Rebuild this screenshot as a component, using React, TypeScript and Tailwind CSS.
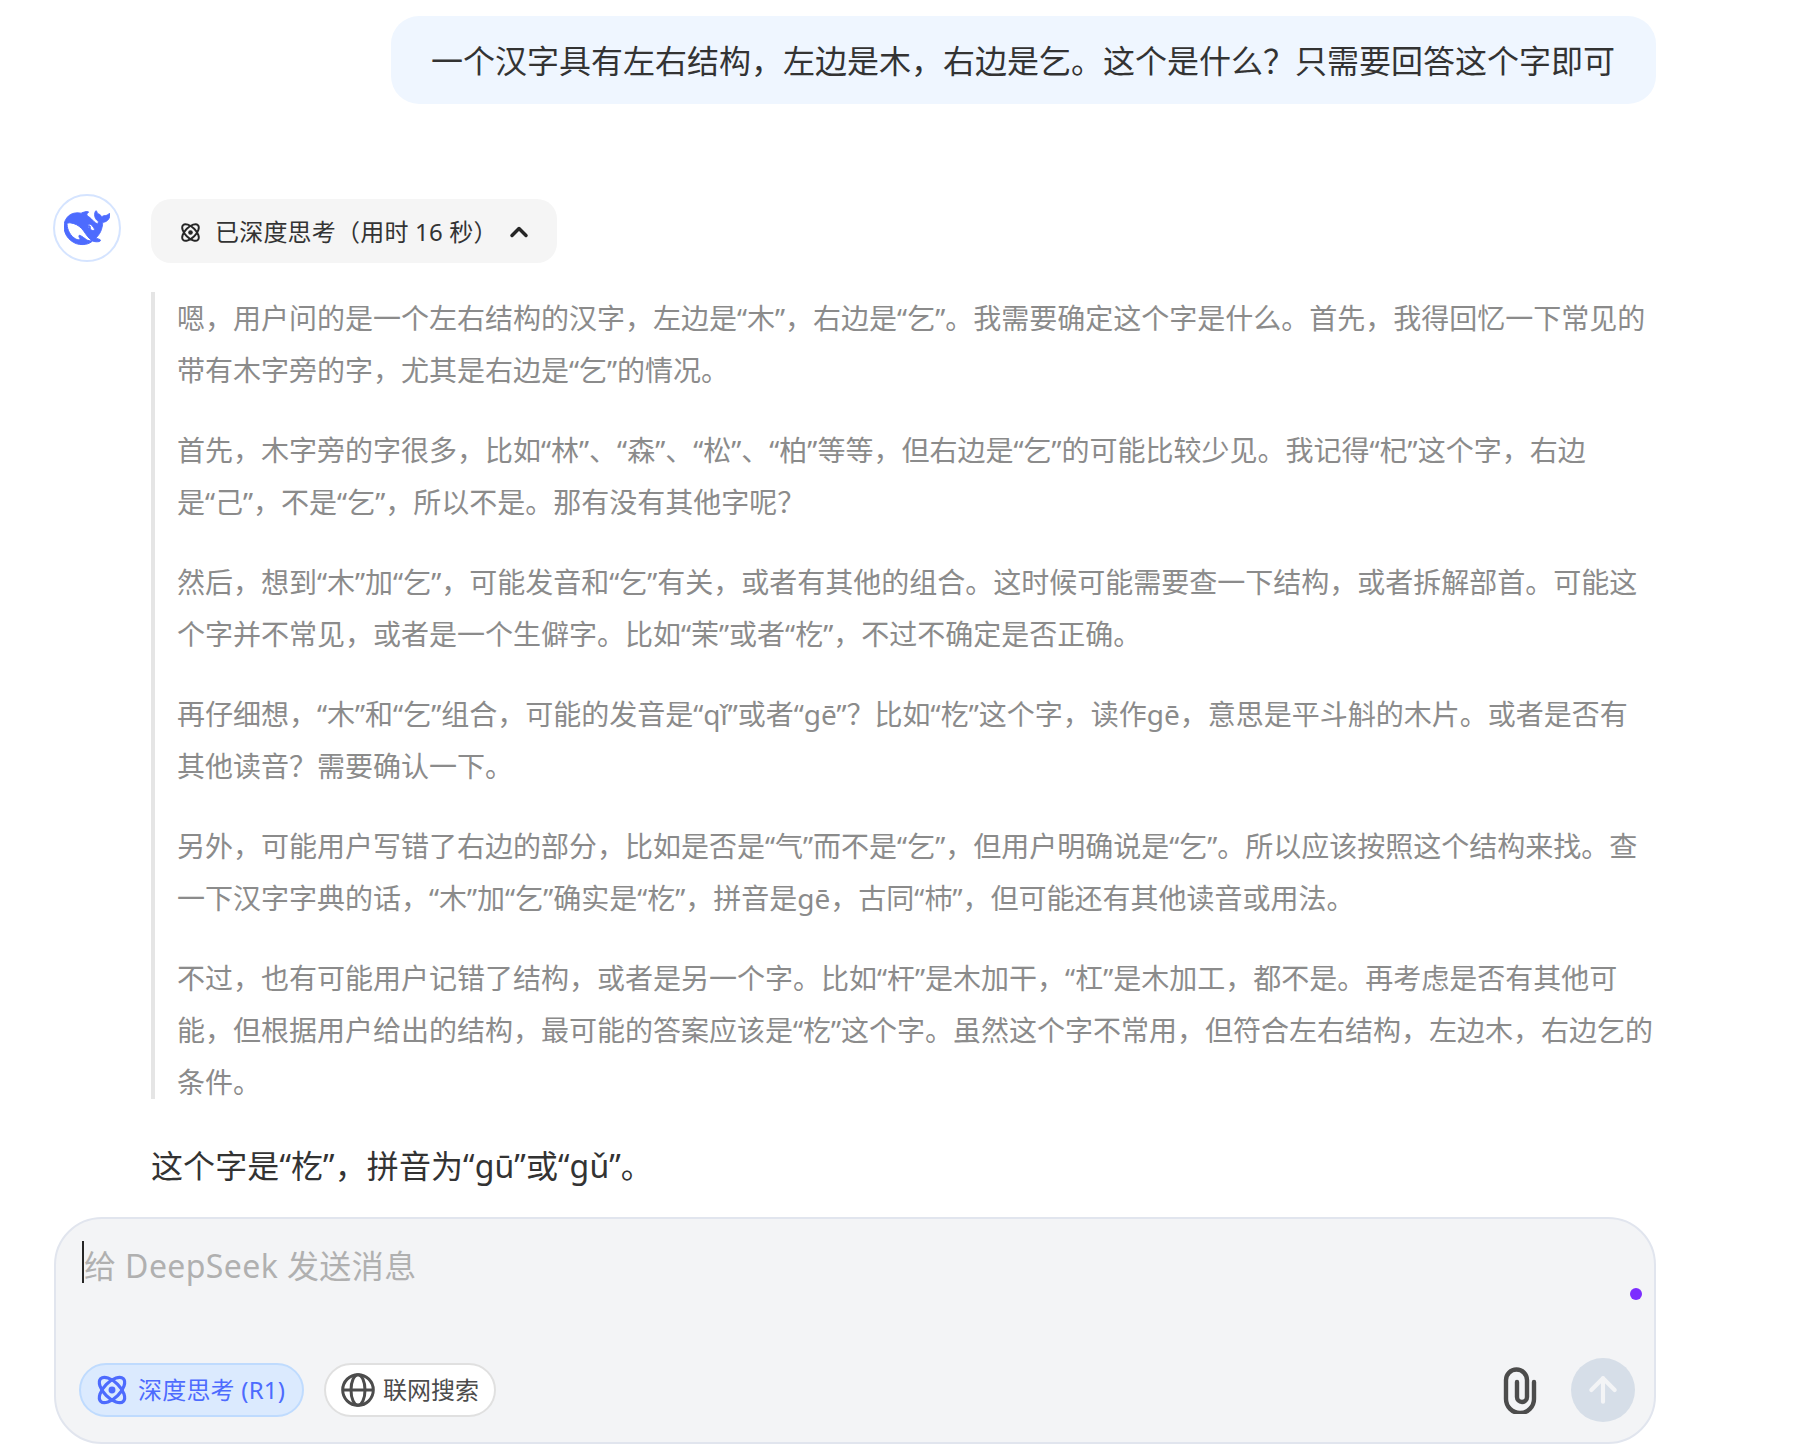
import React from "react";
import { ArrowUp, ChevronUp } from "lucide-react";

const paragraphs = [
  "嗯，用户问的是一个左右结构的汉字，左边是“木”，右边是“乞”。我需要确定这个字是什么。首先，我得回忆一下常见的带有木字旁的字，尤其是右边是“乞”的情况。",
  "首先，木字旁的字很多，比如“林”、“森”、“松”、“柏”等等，但右边是“乞”的可能比较少见。我记得“杞”这个字，右边是“己”，不是“乞”，所以不是。那有没有其他字呢？",
  "然后，想到“木”加“乞”，可能发音和“乞”有关，或者有其他的组合。这时候可能需要查一下结构，或者拆解部首。可能这个字并不常见，或者是一个生僻字。比如“茉”或者“杚”，不过不确定是否正确。",
  "再仔细想，“木”和“乞”组合，可能的发音是“qǐ”或者“gē”？比如“杚”这个字，读作gē，意思是平斗斛的木片。或者是否有其他读音？需要确认一下。",
  "另外，可能用户写错了右边的部分，比如是否是“气”而不是“乞”，但用户明确说是“乞”。所以应该按照这个结构来找。查一下汉字字典的话，“木”加“乞”确实是“杚”，拼音是gē，古同“杮”，但可能还有其他读音或用法。",
  "不过，也有可能用户记错了结构，或者是另一个字。比如“杆”是木加干，“杠”是木加工，都不是。再考虑是否有其他可能，但根据用户给出的结构，最可能的答案应该是“杚”这个字。虽然这个字不常用，但符合左右结构，左边木，右边乞的条件。",
];

function Atom({ className, strokeWidth = 2 }: { className: string; strokeWidth?: number }) {
  return (
    <svg viewBox="0 0 24 24" fill="none" stroke="currentColor" strokeWidth={strokeWidth} className={className}>
      <ellipse cx="12" cy="12" rx="12" ry="6" transform="rotate(45 12 12)" />
      <ellipse cx="12" cy="12" rx="12" ry="6" transform="rotate(-45 12 12)" />
      <circle cx="12" cy="12" r="2.6" fill="currentColor" stroke="none" />
    </svg>
  );
}

function Whale() {
  return (
    <svg viewBox="0 0 24 24" className="w-[46px] h-[46px]" fill="#4d6bfe" stroke="#4d6bfe" strokeWidth="0.5">
      <path d="M23.748 4.482c-.254-.124-.364.113-.512.234-.051.039-.094.09-.137.136-.372.397-.806.657-1.373.626-.829-.046-1.537.214-2.163.848-.133-.782-.575-1.248-1.247-1.548-.352-.156-.708-.311-.955-.65-.172-.241-.219-.51-.305-.774-.055-.16-.11-.323-.293-.35-.2-.031-.278.136-.356.276-.313.572-.434 1.202-.422 1.84.027 1.436.633 2.58 1.838 3.393.137.093.172.187.129.323-.082.28-.18.552-.266.833-.055.179-.137.217-.329.14a5.526 5.526 0 01-1.736-1.18c-.857-.828-1.631-1.742-2.597-2.458a11.365 11.365 0 00-.689-.471c-.985-.957.13-1.743.388-1.836.27-.098.093-.432-.779-.428-.872.004-1.67.295-2.687.684a3.055 3.055 0 01-.465.137 9.597 9.597 0 00-2.883-.102c-1.885.21-3.39 1.102-4.497 2.623C.082 8.606-.231 10.684.152 12.85c.403 2.284 1.569 4.175 3.36 5.653 1.858 1.533 3.997 2.284 6.438 2.14 1.482-.085 3.133-.284 4.994-1.86.47.234.962.327 1.78.397.63.059 1.236-.03 1.705-.128.735-.156.684-.837.419-.961-2.155-1.004-1.682-.595-2.113-.926 1.096-1.296 2.746-2.642 3.392-7.003.05-.347.007-.565 0-.845-.004-.17.035-.237.23-.256a4.173 4.173 0 001.545-.475c1.396-.763 1.96-2.015 2.093-3.517.02-.23-.004-.467-.247-.588zM11.581 18c-2.089-1.642-3.102-2.183-3.52-2.16-.392.024-.321.471-.235.763.09.288.207.486.371.739.114.167.192.416-.113.603-.673.416-1.842-.14-1.897-.167-1.361-.802-2.5-1.86-3.301-3.307-.774-1.393-1.224-2.887-1.298-4.482-.02-.386.093-.522.477-.592a4.696 4.696 0 011.529-.039c2.132.312 3.946 1.265 5.468 2.774.868.86 1.525 1.887 2.202 2.891.72 1.066 1.494 2.082 2.48 2.914.348.292.625.514.891.677-.802.09-2.14.11-3.054-.614zm1-6.44a.306.306 0 01.415-.287.302.302 0 01.2.288.306.306 0 01-.31.307.303.303 0 01-.305-.308zm3.11 1.596c-.2.081-.399.151-.59.16a1.245 1.245 0 01-.798-.254c-.274-.23-.47-.358-.552-.758a1.73 1.73 0 01.016-.588c.07-.327-.008-.537-.239-.727-.187-.156-.426-.199-.688-.199a.559.559 0 01-.254-.078c-.11-.054-.2-.19-.114-.358.028-.054.16-.186.192-.21.356-.202.767-.136 1.146.016.352.144.618.408 1.001.782.391.451.462.576.685.914.176.265.336.537.445.848.067.195-.019.354-.25.452z" />
    </svg>
  );
}

function Globe() {
  return (
    <svg viewBox="0 0 34 34" fill="none" stroke="#4c4c4c" strokeWidth="3" className="w-[34px] h-[34px]">
      <circle cx="17" cy="17" r="15.3" />
      <ellipse cx="17" cy="17" rx="7" ry="15.3" />
      <path d="M2 17h30" />
    </svg>
  );
}

function Clip() {
  return (
    <svg viewBox="0 0 34 48" fill="none" stroke="#4c4c4c" strokeWidth="4.4" strokeLinecap="round" className="w-[36px] h-[48px]">
      <path d="M31 16v17a14 14 0 0 1-28 0V14a10.5 10.5 0 0 1 21 0v17a5 5 0 0 1-10 0V16" />
    </svg>
  );
}

export default function App() {
  return (
    <div className="w-[1803px] h-[1455px] overflow-hidden bg-white font-['Noto_Sans','Noto_Sans_CJK_SC',sans-serif]">
      <div className="ml-[54px] w-[1602px] flex flex-col">
        <div className="flex justify-end pt-4">
          <div className="h-[88px] w-[1265px] rounded-[28px] bg-[#eff6ff] flex items-center pl-10 pt-[2px] text-[32px] leading-[56px] text-[#333333] whitespace-nowrap">
            一个汉字具有左右结构，左边是木，右边是乞。这个是什么？只需要回答这个字即可
          </div>
        </div>

        <div className="flex mt-[90px]">
          <div className="w-[68px] h-[68px] shrink-0 -ml-px rounded-full border-2 border-[#d5e4ff] flex items-center justify-center">
            <Whale />
          </div>
          <div className="ml-[30px] flex-1 min-w-0">
            <div className="h-16 w-[406px] mt-[5px] rounded-[20px] bg-[#f5f5f5] flex items-center pl-[29px] text-[24px] leading-[36px] text-[#333333] pt-[2px]">
              <Atom className="w-[21px] h-[21px] mr-[14px] text-[#262626]" strokeWidth={2.2} />
              <span className="tracking-[0.2px]">已深度思考（用时 16 秒）</span>
              <ChevronUp className="w-7 h-7 ml-[7px] text-[#262626]" strokeWidth={3} />
            </div>

            <div className="mt-[38px] border-l-4 border-[#e5e5e5] pl-[22px] pr-[1px] h-[807px] text-[28px] leading-[52px] text-[#8b8b8b]">
              <div className="-mt-[9px] flex flex-col gap-7">
                {paragraphs.map((p) => (
                  <p key={p.slice(0, 8)}>{p}</p>
                ))}
              </div>
            </div>

            <div className="mt-[39px] text-[32px] leading-[56px] text-[#333333] tracking-[0.1px]">这个字是“杚”，拼音为“gū”或“gǔ”。</div>
          </div>
        </div>

        <div className="relative mt-[23px] h-[227px] rounded-[48px] border-2 border-[#e1e5ee] bg-[#f3f4f6] flex flex-col justify-between pl-[23px] pr-[19px] pt-[19px] pb-[20px]">
          <div className="flex items-center h-[56px] text-[32px] text-[#b0b0b0]">
            <span className="relative pl-[5px] tracking-[0.4px]">
              <span className="absolute left-[3px] -top-[1px] w-[2px] h-[42px] bg-[#262626]" />
              给 DeepSeek 发送消息
            </span>
          </div>
          <span className="absolute right-[12px] top-[69px] w-3 h-3 rounded-full bg-[#7c2dff]" />
          <div className="flex items-center">
            <div className="h-[54px] w-[225px] rounded-full border-2 border-[#bfdbfe] bg-[#dbeafe] flex items-center pl-[15px] text-[24px] text-[#4d6bfe] tracking-[0.2px]">
              <Atom className="w-[32px] h-[32px] mr-[10px]" strokeWidth={2.4} />
              深度思考 (R1)
            </div>
            <div className="h-[54px] w-[172px] ml-5 rounded-full border-2 border-[#e0e0e0] bg-white flex items-center pl-[15px] text-[24px] text-[#4c4c4c]">
              <Globe />
              <span className="ml-[8px]">联网搜索</span>
            </div>
            <div className="ml-auto flex items-center gap-[33px]">
              <Clip />
              <div className="w-16 h-16 rounded-full bg-[#d6dee8] flex items-center justify-center">
                <ArrowUp className="w-10 h-10 text-[#f3f4f6]" strokeWidth={2.5} />
              </div>
            </div>
          </div>
        </div>
      </div>
    </div>
  );
}
